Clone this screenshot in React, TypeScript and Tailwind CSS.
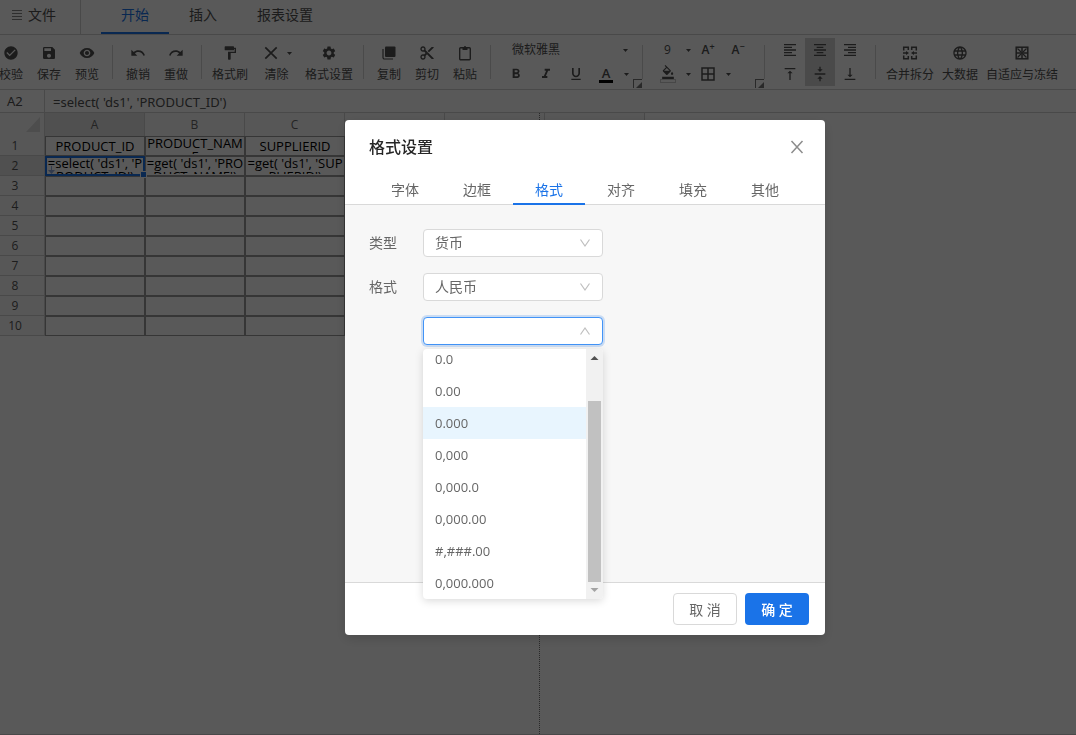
import { useState, type ReactNode } from 'react'
import {
    MdBorderAll,
    MdCheckCircle,
    MdContentCut,
    MdFormatAlignCenter,
    MdFormatAlignLeft,
    MdFormatAlignRight,
    MdFormatBold,
    MdFormatColorFill,
    MdFormatItalic,
    MdFormatPaint,
    MdFormatUnderlined,
    MdLanguage,
    MdRedo,
    MdSave,
    MdSettings,
    MdUndo,
    MdVerticalAlignBottom,
    MdVerticalAlignCenter,
    MdVerticalAlignTop,
    MdVisibility,
} from 'react-icons/md'

const columns = ['A', 'B', 'C', '', '', '']

const rows: string[][] = [
    ['PRODUCT_ID', 'PRODUCT_NAME', 'SUPPLIERID'],
    ["=select( 'ds1', 'PRODUCT_ID')", "=get( 'ds1', 'PRODUCT_NAME')", "=get( 'ds1', 'SUPPLIERID')"],
    ...Array.from({ length: 8 }, () => ['', '', '']),
]

const dialogTabs = ['字体', '边框', '格式', '对齐', '填充', '其他']

const formats = ['0.0', '0.00', '0.000', '0,000', '0,000.0', '0,000.00', '#,###.00', '0,000.000']

function Caret() {
    return (
        <svg className="w-[5px] h-[3px] shrink-0" viewBox="0 0 5 3" fill="currentColor">
            <path d="M0 0h5L2.500 3z" />
        </svg>
    )
}

function CopyIcon() {
    return (
        <svg className="w-4 h-4" viewBox="0 0 16 16" fill="currentColor">
            <path d="M5 1.500h8.500a1 1 0 0 1 1 1V11a1 1 0 0 1-1 1H5a1 1 0 0 1-1-1V2.500a1 1 0 0 1 1-1z" />
            <path d="M2 4v8.500a1.500 1.500 0 0 0 1.500 1.500H12" fill="none" stroke="currentColor" strokeWidth="1.200" />
        </svg>
    )
}

function PasteIcon() {
    return (
        <svg className="w-4 h-4" viewBox="0 0 16 16" fill="none" stroke="currentColor" strokeWidth="1.400">
            <rect x="2.700" y="2.700" width="10.600" height="12" rx="1" />
            <path d="M5.500 2h5v3h-5z" fill="currentColor" stroke="none" />
            <circle cx="8" cy="2" r="1" fill="currentColor" stroke="none" />
        </svg>
    )
}

function ClearIcon() {
    return (
        <svg className="w-4 h-4" viewBox="0 0 16 16" fill="none" stroke="currentColor" strokeWidth="1.700">
            <path d="M2.300 2.300l11.400 11.400M13.700 2.300L2.300 13.700" />
        </svg>
    )
}

function MergeIcon() {
    return (
        <svg className="w-4 h-4" viewBox="0 0 16 16" fill="none" stroke="currentColor" strokeWidth="1.500">
            <path d="M1.700 5.500V2.200h4.600V5M9.700 5V2.200h4.600v3.300M1.700 10.500v3.300h4.600V11M9.700 11v2.800h4.600v-3.300" />
            <path d="M1 8h3.500M15 8h-3.500" />
            <path d="M4 6l3 2-3 2zM12 6L9 8l3 2z" fill="currentColor" stroke="none" />
        </svg>
    )
}

function FreezeIcon() {
    return (
        <svg className="w-4 h-4" viewBox="0 0 16 16" fill="none" stroke="currentColor" strokeWidth="1.500">
            <rect x="2.200" y="2.200" width="11.600" height="11.600" />
            <path d="M2 8h12M8 2v12" />
            <path d="M3.500 3.500L7 7M12.500 3.500L9 7M3.500 12.500L7 9M12.500 12.500L9 9" strokeWidth="1.200" />
        </svg>
    )
}

function Separator() {
    return <span className="w-px h-[34px] mx-1.5 mt-[10px] shrink-0 bg-[#d4d4d4]" />
}

function Tool({ label, children }: { label: string; children: ReactNode }) {
    return (
        <button
            type="button"
            className="flex flex-col items-center shrink-0 min-w-[38px] px-1 pt-[10px] text-xs leading-4 text-[#505050]"
        >
            <span className="flex items-center h-4 mb-[6px] text-base">{children}</span>
            <span className="whitespace-nowrap">{label}</span>
        </button>
    )
}

function MiniTool({ label, children, active }: { label: string; children: ReactNode; active?: boolean }) {
    return (
        <button
            type="button"
            aria-label={label}
            className={`flex flex-col items-center justify-center w-[30px] h-6 text-base text-[#505050] ${active ? 'bg-[#d4d4d4]' : ''}`}
        >
            {children}
        </button>
    )
}

function MiniCaret({ label }: { label: string }) {
    return (
        <button type="button" aria-label={label} className="flex items-center justify-center w-[10px] h-6 text-[#505050]">
            <Caret />
        </button>
    )
}

function GroupCorner() {
    return (
        <button
            type="button"
            aria-label="更多"
            className="absolute -right-1.5 bottom-px w-[9px] h-[9px] border-l border-t border-[#777]"
        >
            <svg className="w-full h-full" viewBox="0 0 8 8" fill="#777">
                <path d="M8 2v6H2z" />
            </svg>
        </button>
    )
}

function Chevron({ up }: { up?: boolean }) {
    return (
        <svg
            className="absolute right-3 top-1/2 -translate-y-1/2 w-3 h-3 pointer-events-none"
            viewBox="0 0 12 12"
            fill="none"
            stroke="#bfbfbf"
            strokeWidth="1.200"
        >
            <path d={up ? 'M1.500 9.500L6 3l4.500 6.500' : 'M1.500 2.500L6 9l4.500-6.500'} />
        </svg>
    )
}

function Toolbar() {
    return (
        <div className="flex h-[55px] -ml-2 border-b border-[#d0d0d0] overflow-hidden">
            <Tool label="校验"><MdCheckCircle /></Tool>
            <Tool label="保存"><MdSave /></Tool>
            <Tool label="预览"><MdVisibility /></Tool>
            <Separator />
            <Tool label="撤销"><MdUndo /></Tool>
            <Tool label="重做"><MdRedo /></Tool>
            <Separator />
            <Tool label="格式刷"><MdFormatPaint /></Tool>
            <Tool label="清除">
                <span className="flex items-center gap-2 pl-[7px] pr-[5px]">
                    <ClearIcon />
                    <Caret />
                </span>
            </Tool>
            <Tool label="格式设置"><MdSettings /></Tool>
            <Separator />
            <Tool label="复制"><CopyIcon /></Tool>
            <Tool label="剪切"><MdContentCut /></Tool>
            <Tool label="粘贴"><PasteIcon /></Tool>
            <Separator />
            <div className="relative shrink-0 w-[139px] pl-1 pt-[3px]">
                <div className="flex items-center h-6 pl-[11px]">
                    <select aria-label="字体" className="appearance-none w-[111px] text-xs leading-4 text-[#505050]">
                        <option>微软雅黑</option>
                    </select>
                    <span className="text-[#505050]"><Caret /></span>
                </div>
                <div className="flex">
                    <MiniTool label="加粗"><MdFormatBold /></MiniTool>
                    <MiniTool label="倾斜"><MdFormatItalic /></MiniTool>
                    <MiniTool label="下划线"><MdFormatUnderlined /></MiniTool>
                    <MiniTool label="字体颜色">
                        <span className="text-[13px] leading-[14px] font-semibold">A</span>
                        <span className="w-[14px] h-[3px] bg-black" />
                    </MiniTool>
                    <MiniCaret label="选择字体颜色" />
                </div>
                <GroupCorner />
            </div>
            <Separator />
            <div className="relative shrink-0 w-[109px] pl-1 pt-[3px]">
                <div className="flex items-center">
                    <select aria-label="字号" className="appearance-none w-[30px] pl-[11px] text-xs leading-4 text-[#505050]">
                        <option>9</option>
                    </select>
                    <MiniCaret label="选择字号" />
                    <MiniTool label="增大字号">
                        <span className="text-xs leading-4 font-semibold">A<sup>+</sup></span>
                    </MiniTool>
                    <MiniTool label="减小字号">
                        <span className="text-xs leading-4 font-semibold">A<sup>−</sup></span>
                    </MiniTool>
                </div>
                <div className="flex">
                    <MiniTool label="填充颜色">
                        <MdFormatColorFill className="w-[14px] h-[14px]" />
                        <span className="w-4 h-1 border border-[#ccc]" />
                    </MiniTool>
                    <MiniCaret label="选择填充颜色" />
                    <MiniTool label="边框"><MdBorderAll className="w-[18px] h-[18px]" /></MiniTool>
                    <MiniCaret label="选择边框" />
                </div>
                <GroupCorner />
            </div>
            <Separator />
            <div className="grid grid-cols-3 shrink-0 content-start px-1 pt-[3px]">
                <MiniTool label="左对齐"><MdFormatAlignLeft /></MiniTool>
                <MiniTool label="居中" active><MdFormatAlignCenter /></MiniTool>
                <MiniTool label="右对齐"><MdFormatAlignRight /></MiniTool>
                <MiniTool label="顶端对齐"><MdVerticalAlignTop /></MiniTool>
                <MiniTool label="垂直居中" active><MdVerticalAlignCenter /></MiniTool>
                <MiniTool label="底端对齐"><MdVerticalAlignBottom /></MiniTool>
            </div>
            <Separator />
            <Tool label="合并拆分"><MergeIcon /></Tool>
            <Tool label="大数据"><MdLanguage /></Tool>
            <Tool label="自适应与冻结"><FreezeIcon /></Tool>
        </div>
    )
}

function Sheet() {
    return (
        <div className="relative flex-1 overflow-hidden border-b border-[#d0d0d0]">
            <table className="table-fixed border-separate border-spacing-0 w-[645px] text-xs">
                <colgroup>
                    <col className="w-[45px]" />
                    {columns.map((_, i) => (
                        <col key={i} className="w-[100px]" />
                    ))}
                </colgroup>
                <thead>
                    <tr className="h-[23px]">
                        <th className="p-0 border-r border-[#d0d0d0] bg-[#fafafa]">
                            <svg className="w-[14px] h-[15px] ml-[26px]" viewBox="0 0 14 15" fill="#dcdcdc">
                                <path d="M14 0v15H0z" />
                            </svg>
                        </th>
                        {columns.map((name, i) => (
                            <th
                                key={i}
                                className={`p-0 font-normal text-[#666] border-r border-[#d0d0d0] ${i === 0 ? 'bg-[#e4e4e4]' : 'bg-[#fafafa]'}`}
                            >
                                {name}
                            </th>
                        ))}
                    </tr>
                </thead>
                <tbody>
                    {rows.map((cells, r) => (
                        <tr key={r} className="h-5">
                            <th
                                className={`p-0 pr-[14px] font-normal text-[#555] border-r border-b border-[#d0d0d0] ${r === 1 ? 'bg-[#e4e4e4]' : 'bg-[#fafafa]'}`}
                            >
                                {r + 1}
                            </th>
                            {cells.map((text, c) => (
                                <td key={c} className="relative h-5 p-0 border border-[#9a9a9a] align-top text-center text-[13px] text-black">
                                    <div
                                        className={`h-[17px] -mx-px overflow-hidden break-all leading-[13px] ${text.length < 12 ? 'pt-[3px]' : ''}`}
                                    >
                                        {text}
                                    </div>
                                    {r === 1 && c === 0 && (
                                        <>
                                            <span className="absolute -inset-px border-2 border-[#1a73e8]" />
                                            <span className="absolute -right-[3px] -bottom-[3px] z-10 w-[7px] h-[7px] border border-white bg-[#1a73e8]" />
                                            <svg className="absolute left-[2px] bottom-px w-[7px] h-2" viewBox="0 0 7 8" fill="#8faadc">
                                                <path d="M3 0h1v4h3L3.500 8 0 4h3z" />
                                            </svg>
                                        </>
                                    )}
                                </td>
                            ))}
                        </tr>
                    ))}
                </tbody>
            </table>
            {/* 分页线 */}
            <span className="absolute left-[539px] inset-y-0 border-l border-dotted border-[#777]" />
        </div>
    )
}

function FormatSelect({ label, value }: { label: string; value: string }) {
    return (
        <label className="flex items-center text-sm text-[#666]">
            <span className="w-[54px]">{label}</span>
            <span className="relative">
                <select className="appearance-none block w-[180px] h-7 px-[11px] rounded border border-[#d9d9d9] bg-white leading-5">
                    <option>{value}</option>
                </select>
                <Chevron />
            </span>
        </label>
    )
}

function FormatDialog() {
    const [tab, setTab] = useState('格式')
    const [format, setFormat] = useState('0.000')

    return (
        <div
            role="dialog"
            aria-label="格式设置"
            className="w-[480px] rounded bg-white text-[#666] shadow-[0_4px_12px_rgba(0,0,0,0.15)]"
        >
            <div className="flex items-center justify-between h-[54px] pl-6 pr-[21px]">
                <h2 className="text-base font-medium text-[#262626]">格式设置</h2>
                <button type="button" aria-label="关闭">
                    <svg className="w-[14px] h-[14px]" viewBox="0 0 14 14" fill="none" stroke="#8c8c8c" strokeWidth="1.500">
                        <path d="M1.500 1l11 12M12.500 1l-11 12" />
                    </svg>
                </button>
            </div>
            <div role="tablist" className="flex px-6 border-b border-[#d9d9d9]">
                {dialogTabs.map(name => (
                    <button
                        key={name}
                        type="button"
                        role="tab"
                        aria-selected={tab === name}
                        onClick={() => setTab(name)}
                        className={`w-[72px] h-[31px] pt-[3px] -mb-px text-sm border-b-2 ${tab === name ? 'text-[#1a73e8] border-[#1a73e8]' : 'border-transparent'}`}
                    >
                        {name}
                    </button>
                ))}
            </div>
            <div className="flex flex-col gap-4 h-[377px] px-6 pt-6 bg-[#f7f7f7]">
                <FormatSelect label="类型" value="货币" />
                <FormatSelect label="格式" value="人民币" />
                <div className="relative ml-[54px] w-[180px]">
                    <select
                        aria-label="数字格式"
                        className="appearance-none block w-full h-7 px-[11px] rounded border border-[#4294f7] bg-white ring-2 ring-[#1a73e8]/20"
                    />
                    <Chevron up />
                    {/* 展开的选项列表 */}
                    <div className="absolute left-0 top-8 z-10 flex w-full h-[250px] rounded overflow-hidden bg-white shadow-[0_2px_8px_rgba(0,0,0,0.15)]">
                        <ul role="listbox" className="flex flex-col flex-1 justify-end">
                            {formats.map(item => (
                                <li
                                    key={item}
                                    role="option"
                                    aria-selected={format === item}
                                    onClick={() => setFormat(item)}
                                    className={`shrink-0 h-8 px-3 text-[13px] leading-8 ${format === item ? 'bg-[#e8f5fe]' : ''}`}
                                >
                                    {item}
                                </li>
                            ))}
                        </ul>
                        <div className="flex flex-col items-center w-[17px] bg-[#f1f1f1]">
                            <svg className="w-[17px] h-[17px]" viewBox="0 0 17 17" fill="#505050">
                                <path d="M8.500 7l4 4h-8z" />
                            </svg>
                            <span className="w-[13px] h-[181px] mt-auto bg-[#c1c1c1]" />
                            <svg className="w-[17px] h-[17px]" viewBox="0 0 17 17" fill="#a3a3a3">
                                <path d="M4.500 6h8l-4 4z" />
                            </svg>
                        </div>
                    </div>
                </div>
            </div>
            <div className="flex justify-end gap-2 px-4 py-[10px] border-t border-[#d9d9d9] text-sm">
                <button type="button" className="w-16 h-8 pt-px rounded border border-[#d9d9d9] bg-white">
                    取 消
                </button>
                <button type="button" className="w-16 h-8 pt-px rounded bg-[#1a73e8] font-medium text-white">
                    确 定
                </button>
            </div>
        </div>
    )
}

export default function App() {
    return (
        <div className="flex flex-col min-h-screen bg-white overflow-hidden font-['Open_Sans','Noto_Sans_CJK_SC',sans-serif]">
            <nav className="flex h-[35px] border-b border-[#d0d0d0] text-sm text-[#505050]">
                <button type="button" className="flex items-center gap-1.5 w-[81px] pl-3 pb-[5px] border-r border-[#d0d0d0]">
                    <svg className="w-[10px] h-[10px]" viewBox="0 0 10 10" stroke="#888" fill="none">
                        <path d="M0 .5h10M0 3.500h10M0 6.500h10M0 9.500h10" />
                    </svg>
                    文件
                </button>
                <div className="flex ml-5">
                    <button type="button" className="px-5 pb-[3px] border-b-2 border-[#1a73e8] text-[#1a73e8]">
                        开始
                    </button>
                    <button type="button" className="px-5 pb-[5px]">插入</button>
                    <button type="button" className="px-5 pb-[5px]">报表设置</button>
                </div>
            </nav>
            <Toolbar />
            <div className="flex items-center h-[23px] border-b border-[#d0d0d0] text-[13px] leading-[22px] text-[#505050] font-['Noto_Sans','Noto_Sans_CJK_SC',sans-serif]">
                <span className="w-[45px] h-full pl-[7px] border-r border-[#d0d0d0]">A2</span>
                <input
                    aria-label="公式"
                    defaultValue="=select( 'ds1', 'PRODUCT_ID')"
                    className="flex-1 h-full pl-2 pt-px"
                />
            </div>
            <Sheet />
            <div className="fixed inset-0 z-20 flex items-start justify-center pl-[94px] pt-[120px] bg-black/65">
                <FormatDialog />
            </div>
        </div>
    )
}
